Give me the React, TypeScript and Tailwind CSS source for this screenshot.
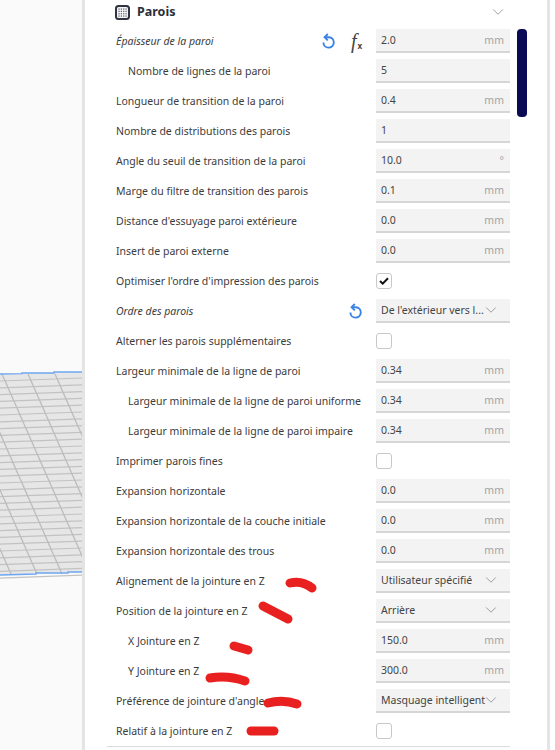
import { ChevronDown } from "lucide-react";

type Setting = {
  label: string;
  indent?: boolean;
  italic?: boolean;
  reset?: boolean;
  formula?: boolean;
  value?: string;
  unit?: string;
  select?: string;
  check?: boolean;
};

const settings: Setting[] = [
  { label: "Épaisseur de la paroi", italic: true, reset: true, formula: true, value: "2.0", unit: "mm" },
  { label: "Nombre de lignes de la paroi", indent: true, value: "5" },
  { label: "Longueur de transition de la paroi", value: "0.4", unit: "mm" },
  { label: "Nombre de distributions des parois", value: "1" },
  { label: "Angle du seuil de transition de la paroi", value: "10.0", unit: "°" },
  { label: "Marge du filtre de transition des parois", value: "0.1", unit: "mm" },
  { label: "Distance d'essuyage paroi extérieure", value: "0.0", unit: "mm" },
  { label: "Insert de paroi externe", value: "0.0", unit: "mm" },
  { label: "Optimiser l'ordre d'impression des parois", check: true },
  { label: "Ordre des parois", italic: true, reset: true, select: "De l'extérieur vers l..." },
  { label: "Alterner les parois supplémentaires", check: false },
  { label: "Largeur minimale de la ligne de paroi", value: "0.34", unit: "mm" },
  { label: "Largeur minimale de la ligne de paroi uniforme", indent: true, value: "0.34", unit: "mm" },
  { label: "Largeur minimale de la ligne de paroi impaire", indent: true, value: "0.34", unit: "mm" },
  { label: "Imprimer parois fines", check: false },
  { label: "Expansion horizontale", value: "0.0", unit: "mm" },
  { label: "Expansion horizontale de la couche initiale", value: "0.0", unit: "mm" },
  { label: "Expansion horizontale des trous", value: "0.0", unit: "mm" },
  { label: "Alignement de la jointure en Z", select: "Utilisateur spécifié" },
  { label: "Position de la jointure en Z", select: "Arrière" },
  { label: "X Jointure en Z", indent: true, value: "150.0", unit: "mm" },
  { label: "Y Jointure en Z", indent: true, value: "300.0", unit: "mm" },
  { label: "Préférence de jointure d'angle", select: "Masquage intelligent" },
  { label: "Relatif à la jointure en Z", check: false },
];

function ResetIcon() {
  return (
    <svg width="15" height="16" viewBox="0 0 15 16" fill="none" stroke="#3b82e6" strokeWidth="1.9">
      <path d="M4 4.2h4a5.2 5.2 0 1 1-5.6 5.2" />
      <path d="M6.8 1 3.6 4.2l3.2 3.2" />
    </svg>
  );
}

function GridIcon() {
  return (
    <svg width="15" height="15" viewBox="0 0 15 15">
      <rect x="1" y="1" width="13" height="13" rx="2.5" fill="#f4f4f6" stroke="#2f3440" strokeWidth="2" />
      {[4, 6.3, 8.7, 11].map((x) =>
        [4, 6.3, 8.7, 11].map((y) => <rect key={`${x}-${y}`} x={x - 0.5} y={y - 0.5} width="1.1" height="1.1" fill="#3d4150" />),
      )}
    </svg>
  );
}

function Formula() {
  return (
    <div className="flex items-end w-[16px] h-[18px] text-[#444]">
      <span className="font-['Liberation_Serif',serif] italic text-[20px] leading-[18px]">f</span>
      <span className="font-['Noto_Sans',sans-serif] font-bold text-[8px] leading-[9px] ml-[1px]">x</span>
    </div>
  );
}

function Control({ s }: { s: Setting }) {
  if (s.check !== undefined) {
    return (
      <div className="w-[16px] h-[16px] rounded-[3px] border-[1.5px] border-[#c9c9c9] bg-white flex items-center justify-center">
        {s.check && (
          <svg width="10" height="8" viewBox="0 0 10 8" fill="none" stroke="#111" strokeWidth="2">
            <path d="M1 4l2.7 2.6L9 1.2" />
          </svg>
        )}
      </div>
    );
  }
  return (
    <div className="w-[134px] h-[24px] bg-[#f3f3f3] border-b-2 border-[#d6d6d6] flex items-center justify-between pt-[2px] pl-[5px] pr-[6px]">
      <span className="text-[#444] whitespace-nowrap">{s.select ?? s.value}</span>
      {s.select ? (
        <ChevronDown size={18} strokeWidth={1} className="text-[#808080] -ml-[6px] mr-[4px] -mt-[2px] shrink-0" />
      ) : (
        <span className="text-[#a3a3a3]">{s.unit}</span>
      )}
    </div>
  );
}

function Row({ s }: { s: Setting }) {
  return (
    <div className="flex items-center h-[30px] pl-[9px]">
      <div className={`flex-1 whitespace-nowrap pt-[2px] text-[#3c3c3c] ${s.indent ? "pl-[12px]" : ""} ${s.italic ? "italic" : ""}`}>{s.label}</div>
      <div className="flex items-center">
        {s.reset && <ResetIcon />}
        {s.formula ? (
          <div className="ml-[15px] mr-[9px]">
            <Formula />
          </div>
        ) : (
          s.reset && <div className="w-[13px]" />
        )}
        <div className="w-[134px]">
          <Control s={s} />
        </div>
      </div>
    </div>
  );
}

function Mesh() {
  const horizontals = Array.from({ length: 30 }, (_, i) => i);
  const diagonals = [-103, -77, -51, -26, 2, 28, 55];
  return (
    <svg width="82" height="210" viewBox="0 0 82 210" className="block">
      <polygon points="0,4 82,2 82,202 0,205" fill="#e6e6e6" />
      {horizontals.map((i) => (
        <line key={i} x1="0" y1={11 + i * 6.8} x2="82" y2={8 + i * 6.8} stroke="#c2c2c2" strokeWidth="1.2" />
      ))}
      {diagonals.map((x) => (
        <line key={x} x1={x} y1="4" x2={x + 88} y2="204" stroke="#bcbcbc" strokeWidth="1.3" />
      ))}
      <polyline points="0,4 22,3.6 22,3 54,3 54,2 82,2" fill="none" stroke="#6ea6f0" strokeWidth="1.4" />
      <polyline points="0,205 36,204 36,203 68,203 68,202 82,202" fill="none" stroke="#6ea6f0" strokeWidth="1.4" />
    </svg>
  );
}

function Scribbles() {
  const marks = [
    "M290 583Q302 580 312 588",
    "M263 606L288 619",
    "M234 646L248 650",
    "M210 678Q228 675 245 681",
    "M268 703Q283 699 297 704",
    "M251 731L274 731",
  ];
  return (
    <svg width="555" height="750" viewBox="0 0 555 750" fill="none" className="absolute inset-0 pointer-events-none">
      {marks.map((d) => (
        <path key={d} d={d} stroke="#e8201f" strokeWidth="9" strokeLinecap="round" />
      ))}
    </svg>
  );
}

export default function App() {
  return (
    <div className="relative w-[555px] h-[750px] overflow-hidden bg-white flex font-['Noto_Sans',sans-serif] text-[10.5px]">
      <div className="w-[82px] shrink-0 bg-[#fafafa] pt-[370px]">
        <Mesh />
      </div>
      <div className="w-[468px] shrink-0 flex bg-white border-x-[3px] border-[#e4e4e4]">
        <div className="w-[425px] shrink-0 pl-[22px]">
          <div className="flex items-center h-[26px] pl-[8px] pb-[2px]">
            <GridIcon />
            <span className="ml-[7px] font-bold text-[12.5px] text-[#2a2f3a]">Parois</span>
            <ChevronDown size={18} strokeWidth={1} className="ml-auto mr-[3px] text-[#808080]" />
          </div>
          <div className="border-b border-[#dcdcdc]">
            {settings.map((s) => (
              <Row key={s.label} s={s} />
            ))}
          </div>
        </div>
        <div className="ml-[7px] mt-[29px] w-[10px] h-[88px] rounded-[4px] bg-[#0b0a54]" />
      </div>
      <Scribbles />
    </div>
  );
}
